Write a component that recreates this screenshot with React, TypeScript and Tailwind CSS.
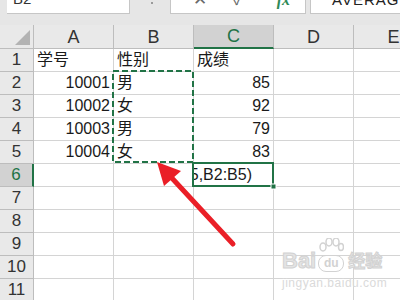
import React from 'react';

const cols = ['A', 'B', 'C', 'D', 'E'];

const data: Record<number, string[]> = {
  1: ['学号', '性别', '成绩'],
  2: ['10001', '男', '85'],
  3: ['10002', '女', '92'],
  4: ['10003', '男', '79'],
  5: ['10004', '女', '83'],
};

const font = { fontFamily: '"Liberation Sans", "Noto Sans CJK SC", sans-serif' };

function Cell({ value, numeric }: { value?: string; numeric?: boolean }) {
  return (
    <div
      className={`w-[80px] shrink-0 h-full border-r border-b border-[#d4d4d4] flex items-center overflow-hidden px-[3px] text-[16px] leading-[18px] text-[#1a1a1a] ${
        numeric ? 'justify-end' : 'justify-start'
      }`}
    >
      {value}
    </div>
  );
}

export default function App() {
  const rows = Array.from({ length: 11 }, (_, i) => i + 1);

  return (
    <div className="relative w-[400px] h-[300px] overflow-hidden bg-white" style={font}>
      {/* formula bar strip */}
      <div className="h-[25px] bg-[#e6e6e6] relative flex items-start">
        <div className="ml-[7px] w-[123px] h-[14px] bg-white border-b border-r border-[#c6c6c6] overflow-hidden">
          <div className="mt-[-12px] ml-[6px] text-[15px] text-[#333]">B2</div>
        </div>
        <div className="ml-[21px] mt-[2px] w-[2px] h-[2px] bg-[#9a9a9a]" />
        <div className="ml-[17px] w-[136px] h-[14px] bg-white border-b border-x border-[#c6c6c6] overflow-hidden flex">
          <div className="ml-[22px] mt-[-13px] text-[17px] text-[#6a6a6a]">✕</div>
          <div className="ml-[26px] mt-[-13px] text-[17px] text-[#6a6a6a]">✓</div>
          <div className="ml-[32px] mt-[-12px] text-[16px] italic font-bold text-[#2f8a57]" style={{ fontFamily: '"Liberation Serif", serif' }}>
            fx
          </div>
        </div>
        <div className="ml-[4px] flex-1 h-[14px] bg-white border-b border-l border-[#c6c6c6] overflow-hidden">
          <div className="ml-[21px] mt-[-11px] text-[15px] text-[#222] tracking-[1px]">AVERAGEIF(C2:C5,B2:B5)</div>
        </div>
      </div>

      {/* column headers */}
      <div className="flex h-[24px] bg-[#e9e9e9]">
        <div className="w-[34px] shrink-0 h-full border-r border-b border-[#bdbdbd] relative">
          <svg className="absolute right-[3px] bottom-[3px]" width="15" height="15" viewBox="0 0 15 15">
            <polygon points="15,0 15,15 0,15" fill="#b3b3b3" />
          </svg>
        </div>
        {cols.map((c) => (
          <div
            key={c}
            className={`w-[80px] shrink-0 h-full flex items-center justify-center text-[18px] leading-[20px] ${
              c === 'C'
                ? 'bg-[#d2d2d2] border-b-2 border-b-[#217346] border-r border-r-[#bdbdbd] text-[#217346]'
                : 'border-r border-b border-[#bdbdbd] text-[#333]'
            }`}
          >
            {c}
          </div>
        ))}
      </div>

      {/* rows */}
      {rows.map((r) => {
        const vals = data[r] || [];
        return (
          <div key={r} className="flex h-[23px]">
            <div
              className={`w-[34px] shrink-0 h-full flex items-center justify-center text-[17px] leading-[18px] ${
                r === 6
                  ? 'bg-[#d2d2d2] border-r-2 border-r-[#217346] border-b border-b-[#bdbdbd] text-[#217346]'
                  : 'bg-[#e9e9e9] border-r border-b border-[#bdbdbd] text-[#333]'
              }`}
            >
              {r}
            </div>
            <Cell value={vals[0]} numeric={r > 1} />
            <Cell value={vals[1]} />
            {r === 6 ? (
              <div className="w-[80px] shrink-0 h-full border-r border-b border-[#d4d4d4] flex items-center justify-end overflow-hidden pr-[21px] text-[16px] leading-[18px] text-[#1a1a1a] whitespace-nowrap">
                =AVERAGEIF(C2:C5,B2:B5)
              </div>
            ) : (
              <Cell value={vals[2]} numeric={r > 1} />
            )}
            <Cell />
            <Cell />
          </div>
        );
      })}

      {/* copy marquee around B2:B5 */}
      <svg className="absolute left-0 top-0 pointer-events-none" width="400" height="300">
        <rect x="113" y="71" width="80" height="91" fill="none" stroke="#217346" strokeWidth="2" strokeDasharray="6 3" />
        {/* active cell C6 */}
        <rect x="193" y="163" width="80" height="23" fill="none" stroke="#217346" strokeWidth="2" />
        <rect x="271" y="184" width="5" height="5" fill="#217346" stroke="#fff" strokeWidth="1" />
        {/* red arrow */}
        <line x1="170" y1="176" x2="233" y2="244" stroke="#ea1f27" strokeWidth="5" strokeLinecap="round" />
        <polygon points="157,162 164,186 181,171" fill="#ea1f27" />
      </svg>

      {/* Baidu watermark */}
      <div className="absolute left-[282px] top-[250px] flex flex-col items-start pointer-events-none select-none">
        <div className="flex items-end">
          <span className="text-[22px] font-bold leading-[22px] text-[#e4e4e4]" style={{ WebkitTextStroke: '1px #d2d2d2' }}>
            Bai
          </span>
          <span className="relative ml-[2px] w-[26px] h-[22px] flex items-end justify-center">
            <svg className="absolute top-[-12px] left-[0px]" width="26" height="16" viewBox="0 0 26 16">
              <ellipse cx="5" cy="9" rx="3" ry="4" fill="none" stroke="#d2d2d2" strokeWidth="1.5" />
              <ellipse cx="11" cy="4" rx="3" ry="4" fill="none" stroke="#d2d2d2" strokeWidth="1.5" />
              <ellipse cx="18" cy="4" rx="3" ry="4" fill="none" stroke="#d2d2d2" strokeWidth="1.5" />
              <ellipse cx="23" cy="9" rx="2.5" ry="3.5" fill="none" stroke="#d2d2d2" strokeWidth="1.5" />
            </svg>
            <span className="w-[26px] h-[17px] rounded-[8px] border-[1.5px] border-[#d2d2d2] text-[12px] leading-[14px] font-bold text-center text-[#d2d2d2]">du</span>
          </span>
          <span className="ml-[4px] text-[17px] leading-[20px] font-bold text-[#e4e4e4]" style={{ WebkitTextStroke: '1px #d2d2d2' }}>
            经验
          </span>
        </div>
        <div className="mt-[5px] text-[12px] leading-[13px] text-[#dadada] tracking-[0.5px]">jingyan.baidu.com</div>
      </div>
    </div>
  );
}
